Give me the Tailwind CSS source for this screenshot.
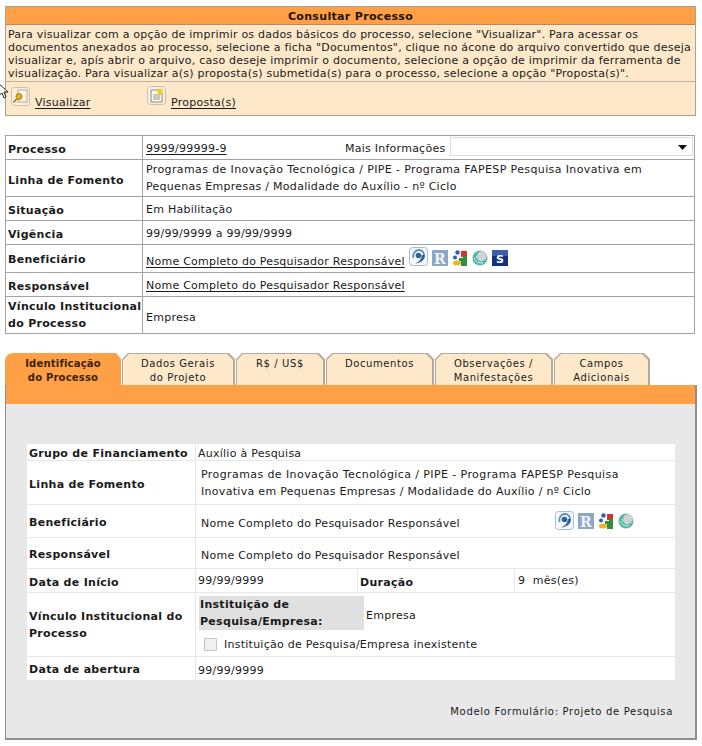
<!DOCTYPE html>
<html lang="pt-BR">
<head>
  <meta charset="UTF-8" />
  <title>Consultar Processo</title>
  <script src="https://cdn.jsdelivr.net/npm/@tailwindcss/browser@4"></script>
</head>
<body class="bg-white font-['DejaVu_Sans',Verdana,sans-serif] text-[11px] leading-[13px] tracking-[0.25px] text-[#1a1a1a] w-[702px] h-[746px] overflow-hidden relative">

  <!-- icon symbols -->
  <svg class="hidden">
    <symbol id="ic-swirl" viewBox="0 0 19 19">
      <rect x="0.5" y="0.5" width="18" height="18" rx="3" fill="#f4f7fb" stroke="#a9bdd5"/>
      <path d="M4.500 11C3.500 7 6 3 10 3c3.200 0 5 2.400 5 5.200" fill="none" stroke="#5a8fc2" stroke-width="1.800"/>
      <path d="M16 8c0 4.500-3.500 8-10 8.500 3.500-1.500 6.500-3.500 6.800-8.500z" fill="#2d6299"/>
      <circle cx="9.500" cy="8.500" r="2.800" fill="#2d6299"/>
    </symbol>
    <symbol id="ic-r" viewBox="0 0 16 16">
      <rect width="16" height="16" fill="#8ba6c6"/>
      <text x="8" y="13.500" text-anchor="middle" font-family="'DejaVu Serif',serif" font-size="14" font-weight="700" fill="#f1f5fa">R</text>
    </symbol>
    <symbol id="ic-blobs" viewBox="0 0 16 16">
      <circle cx="5.500" cy="2.500" r="2.200" fill="#2f5fb0"/>
      <path d="M9 1h6v6H9z" fill="#d8322a"/>
      <circle cx="3" cy="7.500" r="2" fill="#2f5fb0"/>
      <ellipse cx="5" cy="13" rx="4" ry="2.500" fill="#f1b320"/>
      <path d="M7 8h4V6h4v10H9v-5H7z" fill="#2f8f3c"/>
    </symbol>
    <symbol id="ic-globe" viewBox="0 0 16 16">
      <circle cx="8" cy="8" r="7.500" fill="#56b8a3"/>
      <circle cx="10" cy="6" r="4.800" fill="#cfd2d2"/>
      <path d="M2 8c2 4 5 5 9 5M4 6c1 3 3 4 6 5" fill="none" stroke="#d5efe8" stroke-width="1"/>
    </symbol>
    <symbol id="ic-s" viewBox="0 0 16 16">
      <rect width="16" height="16" fill="#15307f"/>
      <rect y="0" width="16" height="6" fill="#3c5cae"/>
      <text x="8" y="12.500" text-anchor="middle" font-family="'DejaVu Sans',sans-serif" font-size="11" font-weight="700" fill="#ffffff">S</text>
    </symbol>
  </svg>

  <!-- mouse cursor left in the capture -->
  <svg class="absolute left-0 top-[81px] z-10" width="11" height="20" viewBox="0 0 11 20">
    <path d="M-3 1 8 11H4l2 5-2 1-2-5-4 3z" fill="#fff" stroke="#222" stroke-width="1"/>
  </svg>

  <!-- Consultar Processo -->
  <section class="absolute left-[5px] top-[6px] w-[691px] h-[110px] border border-[#a8a196] bg-[#fde9ca]">
    <h1 class="h-[18px] bg-[#ff9f46] border-b border-[#b58a5e] text-center font-bold tracking-[0.33px] text-[#20140a] leading-[19px]">Consultar Processo</h1>
    <p class="h-[57px] border-b border-[#bdb3a3] px-[2px] pt-[3px] whitespace-pre tracking-[0.22px]">Para visualizar com a opção de imprimir os dados básicos do processo, selecione "Visualizar". Para acessar os
documentos anexados ao processo, selecione a ficha "Documentos", clique no ácone do arquivo convertido que deseja
visualizar e, apís abrir o arquivo, caso deseje imprimir o documento, selecione a opção de imprimir da ferramenta de
visualização. Para visualizar a(s) proposta(s) submetida(s) para o processo, selecione a opção "Proposta(s)".</p>
    <div class="flex items-start pt-[5px] pl-[5px]">
      <a class="flex items-start w-[136px]" href="#">
        <svg width="19" height="19" viewBox="0 0 19 19" class="shrink-0">
          <rect x="0.500" y="0.500" width="18" height="18" rx="3" fill="#f6efe0" stroke="#c8c0b0"/>
          <rect x="7" y="3" width="9" height="12" fill="#fdf6e6" stroke="#b9a98a"/>
          <circle cx="8" cy="9.500" r="3" fill="#e3b21c" stroke="#a8811a"/>
          <path d="M5.500 12 2.500 15.500" stroke="#9a6b2a" stroke-width="1.500"/>
        </svg>
        <span class="ml-[5px] mt-[9px] underline underline-offset-2">Visualizar</span>
      </a>
      <a class="flex items-start" href="#">
        <svg width="19" height="19" viewBox="0 0 19 19" class="shrink-0 -mt-[1px]">
          <rect x="0.500" y="0.500" width="18" height="18" rx="3" fill="#f6efe0" stroke="#c8c0b0"/>
          <path d="M4 4h8l3 3v9H4z" fill="#fbf8ee" stroke="#8f8a7a"/>
          <path d="M6 9h7M6 11h7M6 13h7" stroke="#9a958a"/>
          <path d="M13 1l1 3 3-1-2 3 2 2-3-.5-1 2.500-1-2.500-3 .5 2-2-2-3 3 1z" fill="#f0c92a"/>
        </svg>
        <span class="ml-[5px] mt-[9px] underline underline-offset-2">Proposta(s)</span>
      </a>
    </div>
  </section>

  <!-- Dados do processo -->
  <section class="absolute left-[5px] top-[135px] w-[690px] border border-[#a3a3a3] bg-white">
    <div class="flex h-[24px] border-b border-[#a3a3a3]">
      <div class="w-[137px] shrink-0 border-r border-[#a3a3a3] pl-[2px] pt-[7px] font-bold tracking-[0.3px]">Processo</div>
      <div class="flex-1 flex pl-[3px] pt-[6px]">
        <a href="#" class="underline underline-offset-2 w-[199px]">9999/99999-9</a>
        <span class="w-[105px]">Mais Informações</span>
        <div class="relative -mt-[5px] w-[243px] h-[19px] border border-[#dcdcdc]">
          <svg class="absolute right-[5px] top-[7px]" width="9" height="5" viewBox="0 0 9 5"><path d="M0 0h9L4.500 5z" fill="#111"/></svg>
        </div>
      </div>
    </div>
    <div class="flex h-[37px] border-b border-[#a3a3a3]">
      <div class="w-[137px] shrink-0 border-r border-[#a3a3a3] pl-[2px] pt-[14px] font-bold tracking-[0.3px]">Linha de Fomento</div>
      <div class="flex-1 pl-[3px] pt-[1px] leading-[17px]"><span class="block tracking-[0.38px]">Programas de Inovação Tecnológica / PIPE - Programa FAPESP Pesquisa Inovativa em</span><span class="block tracking-[0.29px]">Pequenas Empresas / Modalidade do Auxílio - nº Ciclo</span></div>
    </div>
    <div class="flex h-[24px] border-b border-[#a3a3a3]">
      <div class="w-[137px] shrink-0 border-r border-[#a3a3a3] pl-[2px] pt-[7px] font-bold tracking-[0.3px]">Situação</div>
      <div class="flex-1 pl-[3px] pt-[6px]">Em Habilitação</div>
    </div>
    <div class="flex h-[24px] border-b border-[#a3a3a3]">
      <div class="w-[137px] shrink-0 border-r border-[#a3a3a3] pl-[2px] pt-[7px] font-bold tracking-[0.3px]">Vigência</div>
      <div class="flex-1 pl-[3px] pt-[6px]">99/99/9999 a 99/99/9999</div>
    </div>
    <div class="flex h-[28px] border-b border-[#a3a3a3]">
      <div class="w-[137px] shrink-0 border-r border-[#a3a3a3] pl-[2px] pt-[8px] font-bold tracking-[0.3px]">Beneficiário</div>
      <div class="flex-1 flex items-start pl-[3px]">
        <a href="#" class="underline underline-offset-2 mt-[10px]">Nome Completo do Pesquisador Responsável</a>
        <svg class="ml-[4px] mt-[2px]" width="19" height="19"><use href="#ic-swirl"/></svg>
        <svg class="ml-[4px] mt-[5px]" width="16" height="16"><use href="#ic-r"/></svg>
        <svg class="ml-[4px] mt-[5px]" width="16" height="16"><use href="#ic-blobs"/></svg>
        <svg class="ml-[4px] mt-[5px]" width="16" height="16"><use href="#ic-globe"/></svg>
        <svg class="ml-[4px] mt-[5px]" width="16" height="16"><use href="#ic-s"/></svg>
      </div>
    </div>
    <div class="flex h-[24px] border-b border-[#a3a3a3]">
      <div class="w-[137px] shrink-0 border-r border-[#a3a3a3] pl-[2px] pt-[7px] font-bold tracking-[0.3px]">Responsável</div>
      <div class="flex-1 pl-[3px] pt-[6px]"><a href="#" class="underline underline-offset-2">Nome Completo do Pesquisador Responsável</a></div>
    </div>
    <div class="flex h-[36px]">
      <div class="w-[137px] shrink-0 border-r border-[#a3a3a3] pl-[2px] flex items-center font-bold tracking-[0.3px] leading-[17px]">Vínculo Institucional<br>do Processo</div>
      <div class="flex-1 pl-[3px] pt-[14px]">Empresa</div>
    </div>
  </section>

  <!-- Fichas -->
  <nav class="absolute left-[5px] top-[353px] flex h-[32px] gap-[1px] text-center text-[10px] tracking-[0.6px]">
    <div class="w-[116px] h-[32px] bg-[#ff9f46] rounded-tl-[8px] [clip-path:polygon(0_0,calc(100%-5px)_0,100%_6px,100%_100%,0_100%)] pt-[4px] font-bold tracking-[0.2px] text-[#3a2408] leading-[14px]">Identificação<br>do Processo</div>
    <div class="w-[113px] h-[32px] bg-[#b3ab9c] pl-[1px] pt-[1px] pr-[2px] [clip-path:polygon(0_6px,6px_0,calc(100%-6px)_0,100%_6px,100%_100%,0_100%)]"><div class="h-full bg-[#fde9ca] pt-[3px] leading-[14px] [clip-path:polygon(0_6px,6px_0,calc(100%-6px)_0,100%_6px,100%_100%,0_100%)]">Dados Gerais<br>do Projeto</div></div>
    <div class="w-[89px] h-[32px] bg-[#b3ab9c] pl-[1px] pt-[1px] pr-[2px] [clip-path:polygon(0_6px,6px_0,calc(100%-6px)_0,100%_6px,100%_100%,0_100%)]"><div class="h-full bg-[#fde9ca] pt-[3px] leading-[14px] [clip-path:polygon(0_6px,6px_0,calc(100%-6px)_0,100%_6px,100%_100%,0_100%)]">R$ / US$</div></div>
    <div class="w-[108px] h-[32px] bg-[#b3ab9c] pl-[1px] pt-[1px] pr-[2px] [clip-path:polygon(0_6px,6px_0,calc(100%-6px)_0,100%_6px,100%_100%,0_100%)]"><div class="h-full bg-[#fde9ca] pt-[3px] leading-[14px] [clip-path:polygon(0_6px,6px_0,calc(100%-6px)_0,100%_6px,100%_100%,0_100%)]">Documentos</div></div>
    <div class="w-[118px] h-[32px] bg-[#b3ab9c] pl-[1px] pt-[1px] pr-[2px] [clip-path:polygon(0_6px,6px_0,calc(100%-6px)_0,100%_6px,100%_100%,0_100%)]"><div class="h-full bg-[#fde9ca] pt-[3px] leading-[14px] [clip-path:polygon(0_6px,6px_0,calc(100%-6px)_0,100%_6px,100%_100%,0_100%)]">Observações /<br>Manifestações</div></div>
    <div class="w-[96px] h-[32px] bg-[#b3ab9c] pl-[1px] pt-[1px] pr-[2px] [clip-path:polygon(0_6px,6px_0,calc(100%-6px)_0,100%_6px,100%_100%,0_100%)]"><div class="h-full bg-[#fde9ca] pt-[3px] leading-[14px] [clip-path:polygon(0_6px,6px_0,calc(100%-6px)_0,100%_6px,100%_100%,0_100%)]">Campos<br>Adicionais</div></div>
  </nav>

  <!-- Painel da ficha -->
  <section class="absolute left-[5px] top-[385px] w-[692px] h-[355px] bg-[#e8e8e8] border-l border-r-2 border-b-2 border-[#8f8f8f]">
    <div class="h-[19px] bg-[#ff9f46]"></div>
    <div class="ml-[21px] mt-[40px] w-[648px] bg-white">
      <div class="flex h-[17px] border-b border-[#e6e6e6]">
        <div class="w-[169px] shrink-0 border-r border-[#e6e6e6] pl-[2px] pt-[3px] font-bold tracking-[0.3px]">Grupo de Financiamento</div>
        <div class="flex-1 pl-[2px] pt-[3px]">Auxílio à Pesquisa</div>
      </div>
      <div class="flex h-[44px] border-b border-[#e6e6e6]">
        <div class="w-[169px] shrink-0 border-r border-[#e6e6e6] pl-[2px] pt-[17px] font-bold tracking-[0.3px]">Linha de Fomento</div>
        <div class="flex-1 pl-[5px] pt-[5px] leading-[17px]"><span class="block tracking-[0.41px]">Programas de Inovação Tecnológica / PIPE - Programa FAPESP Pesquisa</span><span class="block tracking-[0.3px]">Inovativa em Pequenas Empresas / Modalidade do Auxílio / nº Ciclo</span></div>
      </div>
      <div class="flex h-[33px] border-b border-[#e6e6e6]">
        <div class="w-[169px] shrink-0 border-r border-[#e6e6e6] pl-[2px] pt-[11px] font-bold tracking-[0.3px]">Beneficiário</div>
        <div class="flex-1 flex pl-[5px] pt-[12px]">
          <span class="w-[354px]">Nome Completo do Pesquisador Responsável</span>
          <svg class="-mt-[6px]" width="19" height="19"><use href="#ic-swirl"/></svg>
          <svg class="ml-[4px] -mt-[4px]" width="16" height="16"><use href="#ic-r"/></svg>
          <svg class="ml-[4px] -mt-[4px]" width="16" height="16"><use href="#ic-blobs"/></svg>
          <svg class="ml-[4px] -mt-[4px]" width="16" height="16"><use href="#ic-globe"/></svg>
        </div>
      </div>
      <div class="flex h-[31px] border-b border-[#e6e6e6]">
        <div class="w-[169px] shrink-0 border-r border-[#e6e6e6] pl-[2px] pt-[10px] font-bold tracking-[0.3px]">Responsável</div>
        <div class="flex-1 pl-[5px] pt-[11px]">Nome Completo do Pesquisador Responsável</div>
      </div>
      <div class="flex h-[24px] border-b border-[#e6e6e6]">
        <div class="w-[169px] shrink-0 border-r border-[#e6e6e6] pl-[2px] pt-[7px] font-bold tracking-[0.3px]">Data de Início</div>
        <div class="w-[162px] shrink-0 border-r border-[#e6e6e6] pl-[2px] pt-[5px]">99/99/9999</div>
        <div class="w-[157px] shrink-0 border-r border-[#e6e6e6] pl-[2px] pt-[7px] font-bold tracking-[0.3px]">Duração</div>
        <div class="flex-1 pl-[3px] pt-[5px]">9&nbsp; mês(es)</div>
      </div>
      <div class="flex h-[64px] border-b border-[#e6e6e6]">
        <div class="w-[169px] shrink-0 border-r border-[#e6e6e6] pl-[2px] flex items-center font-bold tracking-[0.3px] leading-[17px]">Vínculo Institucional do<br>Processo</div>
        <div class="flex-1 pl-[3px] pt-[3px]">
          <div class="flex items-start">
            <div class="w-[165px] h-[34px] bg-[#e0e0e0] pl-[1px] font-bold tracking-[0.3px] leading-[17px]">Instituição de<br>Pesquisa/Empresa:</div>
            <span class="ml-[2px] mt-[13px]">Empresa</span>
          </div>
          <label class="flex items-center mt-[7px] ml-[5px]">
            <span class="w-[13px] h-[13px] border border-[#c4c4c4] bg-[#f0f0f0] rounded-[1px]"></span>
            <span class="ml-[7px] mt-[1px]">Instituição de Pesquisa/Empresa inexistente</span>
          </label>
        </div>
      </div>
      <div class="flex h-[23px]">
        <div class="w-[169px] shrink-0 border-r border-[#e6e6e6] pl-[2px] pt-[6px] font-bold tracking-[0.3px]">Data de abertura</div>
        <div class="flex-1 pl-[2px] pt-[7px]">99/99/9999</div>
      </div>
    </div>
    <p class="mt-[25px] pr-[22px] text-right text-[10px] tracking-[0.68px]">Modelo Formulário: Projeto de Pesquisa</p>
  </section>

</body>
</html>
